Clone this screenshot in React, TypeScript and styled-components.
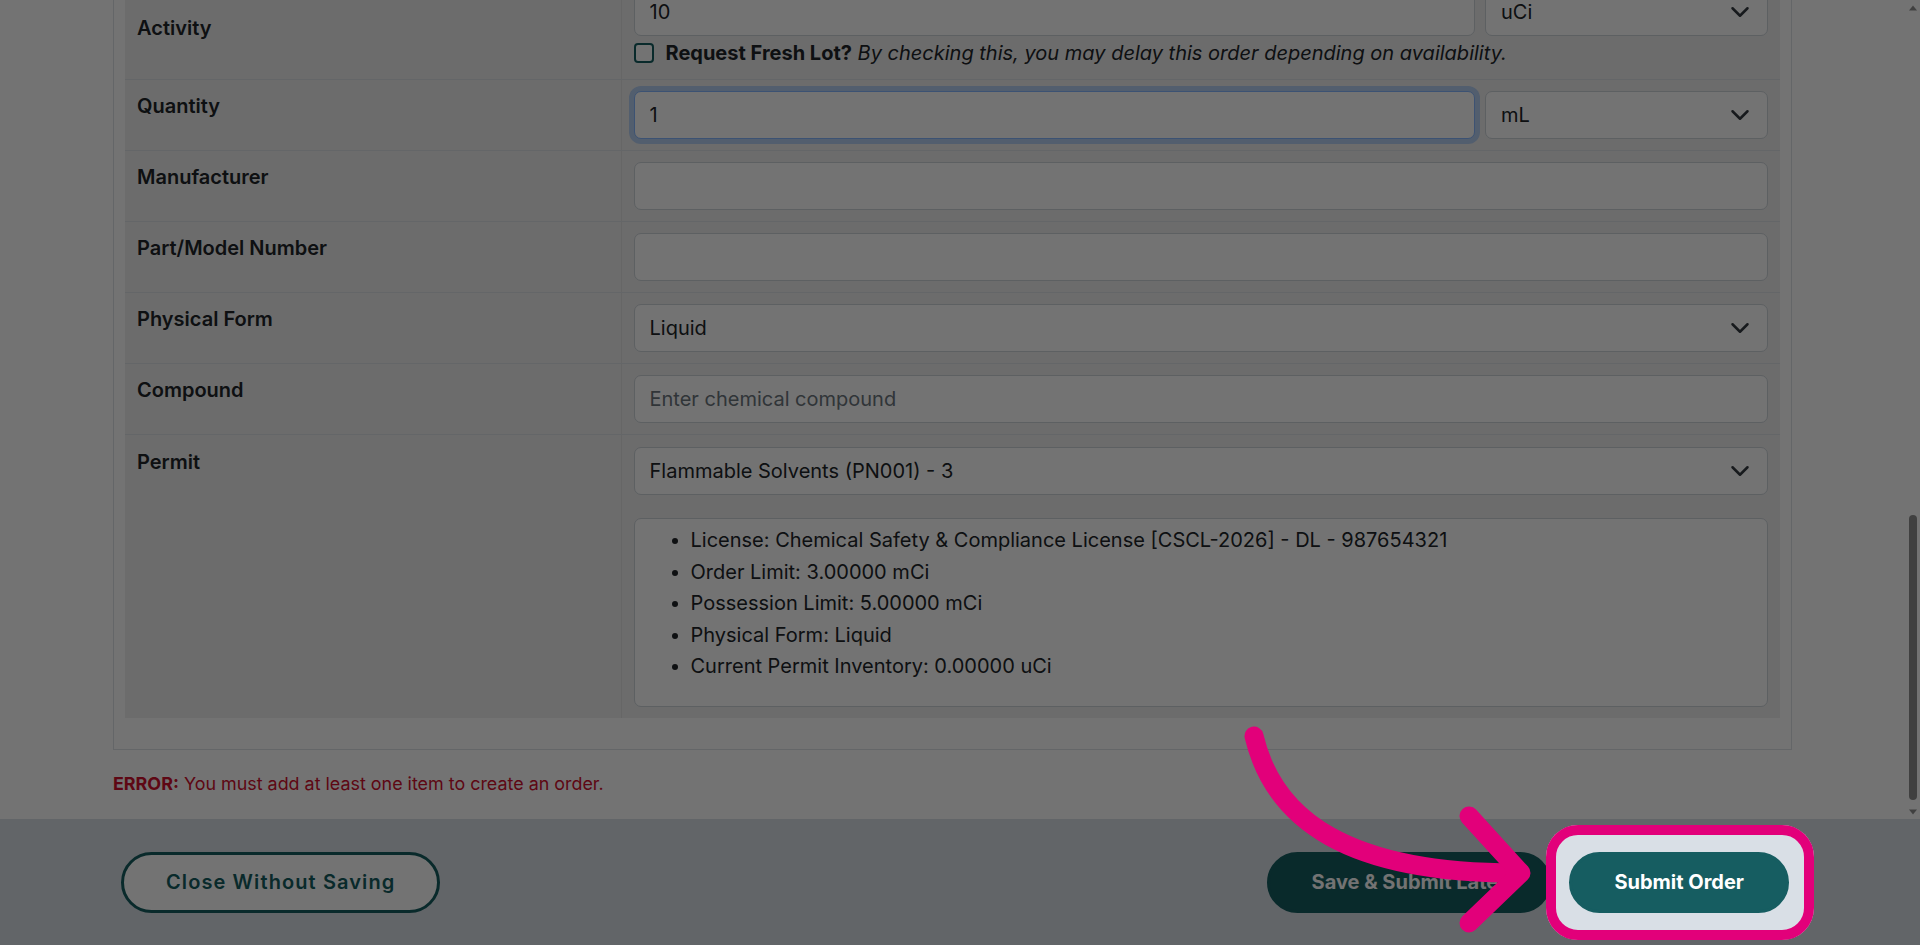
import React from "react";
import styled, { createGlobalStyle, css } from "styled-components";

const TEAL = "#165d61";
const PINK = "#e2007a";
const SCROLL_GREY = "#8f8f8f";

const GlobalStyle = createGlobalStyle`
  html, body { margin: 0; padding: 0; height: 100%; overflow: hidden; }
  body {
    font-family: Inter, "Noto Sans", "Liberation Sans", sans-serif;
    color: #212529;
    background: #ffffff;
  }
  #root { height: 100%; }
  *, *::before, *::after { box-sizing: border-box; }
`;

const Page = styled.div`
  height: 100vh;
  display: flex;
  flex-direction: column;
  position: relative;
`;

const Main = styled.div`
  flex: 1;
  min-height: 0;
  display: flex;
  background: #ffffff;
`;

const ScrollArea = styled.div`
  flex: 1;
  min-width: 0;
  overflow: hidden;
  display: flex;
  flex-direction: column-reverse;
`;

const ScrollRail = styled.div`
  width: 15px;
  flex-shrink: 0;
  display: flex;
  flex-direction: column;
  background: #ffffff;
`;

const ScrollArrow = styled.div`
  height: 15px;
  flex-shrink: 0;
  display: flex;
  align-items: center;
  justify-content: center;
`;

const ScrollTrack = styled.div`
  flex: 1;
  display: flex;
  flex-direction: column;
  justify-content: flex-end;
  padding-bottom: 4px;
`;

const ScrollThumb = styled.div`
  width: 8px;
  height: 285px;
  margin: 0 auto;
  border-radius: 4px;
  background: ${SCROLL_GREY};
`;

const ScrollContent = styled.div`
  flex-shrink: 0;
  padding: 24px 113px 22px;
`;

const PageTitle = styled.h1`
  margin: 0 0 20px;
  font-size: 32px;
  line-height: 40px;
  font-weight: 700;
  color: ${TEAL};
`;

const SectionTitle = styled.h2`
  margin: 0 0 14px;
  font-size: 24px;
  line-height: 36px;
  font-weight: 700;
`;

const Section = styled.div`
  border: 1px solid #dee2e6;
  padding: 11px;
  background: #ffffff;
  & + ${SectionTitle} { margin-top: 20px; }
`;

const FormTable = styled.div`
  background: #f0f0f0;
  margin-bottom: 20px;
`;

const Row = styled.div`
  display: grid;
  grid-template-columns: 30% 70%;
  border-top: 1px solid #dee2e6;
`;

const LabelCell = styled.div<{ $center?: boolean; $padTop?: number }>`
  display: flex;
  align-items: ${(p) => (p.$center ? "center" : "flex-start")};
  padding: ${(p) => p.$padTop ?? 11}px 12px 11px;
  border-right: 1px solid #e3e3e3;
  font-size: 20px;
  line-height: 30px;
  font-weight: 600;
  color: #212529;
`;

const ValueCell = styled.div<{ $padTop?: number }>`
  padding: ${(p) => p.$padTop ?? 11}px 12px 11px;
  min-width: 0;
`;

const TextInput = styled.input<{ $focused?: boolean }>`
  display: block;
  width: 100%;
  height: 48px;
  padding: 0 15px;
  font-family: inherit;
  font-size: 20px;
  color: #212529;
  background: #ffffff;
  border: 1px solid #ced4da;
  border-radius: 7px;
  outline: none;
  &::placeholder { color: #6c757d; opacity: 1; }
  ${(p) =>
    p.$focused &&
    css`
      border-color: #86b7fe;
      box-shadow: 0 0 0 5px rgba(13, 110, 253, 0.25);
    `}
`;

const SelectBox = styled.div`
  height: 48px;
  display: flex;
  align-items: center;
  justify-content: space-between;
  padding: 0 17px 0 15px;
  border: 1px solid #ced4da;
  border-radius: 7px;
  background: #ffffff;
  font-size: 20px;
  color: #212529;
  white-space: nowrap;
`;

const AmountGrid = styled.div`
  display: grid;
  grid-template-columns: 1fr 283px;
  gap: 10px;
`;

const CheckLine = styled.label`
  display: flex;
  align-items: center;
  gap: 12px;
  margin-top: 2px;
  font-size: 20px;
  line-height: 30px;
  white-space: nowrap;
  strong { font-weight: 700; }
  em { font-style: italic; }
`;

const CheckBox = styled.span`
  width: 20px;
  height: 20px;
  flex-shrink: 0;
  border: 2.5px solid ${TEAL};
  border-radius: 4px;
  background: #ffffff;
`;

const InfoBox = styled.div`
  margin-top: 23px;
  border: 1px solid #ced4da;
  border-radius: 7px;
  background: #ffffff;
  padding: 6px;
`;

const InfoList = styled.ul`
  margin: 0 0 17.5px;
  padding-left: 50px;
  font-size: 20px;
  line-height: 31.5px;
`;

const ErrorText = styled.p`
  margin: 21px 0 0;
  font-size: 17.9px;
  line-height: 26px;
  color: #d0102e;
  strong { font-weight: 700; }
`;

const Footer = styled.footer`
  height: 126px;
  flex-shrink: 0;
  display: flex;
  align-items: center;
  gap: 18px;
  padding: 0 131px 0 121px;
  background: #d9dfe6;
`;

const Spacer = styled.div`
  flex: 1;
`;

const PillButton = styled.button<{ $variant: "outline" | "solid" }>`
  font-family: inherit;
  font-size: 20px;
  line-height: 30px;
  padding: 12.5px 42px;
  border-radius: 999px;
  border: 3px solid ${TEAL};
  cursor: pointer;
  white-space: nowrap;
  ${(p) =>
    p.$variant === "outline"
      ? css`
          background: #ffffff;
          color: ${TEAL};
          font-weight: 600;
          letter-spacing: 1.1px;
        `
      : css`
          background: ${TEAL};
          color: #ffffff;
          font-weight: 700;
        `}
`;

const SpotlightAnchor = styled.div`
  position: relative;
  display: flex;
`;

const SpotlightFrame = styled.div`
  position: absolute;
  top: -27px;
  bottom: -27px;
  left: -23px;
  right: -25px;
  border: 10px solid ${PINK};
  border-radius: 32px;
  box-shadow: 0 0 0 4000px rgba(0, 0, 0, 0.55);
  pointer-events: none;
  z-index: 10;
`;

const ArrowSvg = styled.svg`
  position: absolute;
  left: -335px;
  top: -136px;
  width: 310px;
  height: 230px;
  overflow: visible;
  pointer-events: none;
  z-index: 11;
`;

const Chevron = () => (
  <svg width="20" height="20" viewBox="0 0 16 16" aria-hidden="true">
    <path d="M2 5l6 6 6-6" fill="none" stroke="#343a40" strokeWidth="2" strokeLinecap="round" strokeLinejoin="round" />
  </svg>
);

const Triangle = ({ up }: { up?: boolean }) => (
  <svg width="8" height="6" viewBox="0 0 8 6" aria-hidden="true">
    <path d={up ? "M4 0.5L8 5.5H0Z" : "M0 0.5H8L4 5.5Z"} fill={SCROLL_GREY} />
  </svg>
);

const Select = ({ value }: { value: string }) => (
  <SelectBox>
    <span>{value}</span>
    <Chevron />
  </SelectBox>
);

const orderRows = [
  "Requested By",
  "Email",
  "Phone",
  "Department",
  "Building",
  "Room",
  "Principal Investigator",
  "Account Number",
  "Requested Delivery Date",
];

const itemRows = [
  "Item Type",
  "Vendor",
  "Isotope",
  "Item Name",
  "CAS Number",
  "Catalog Number",
  "Concentration",
  "Reference Date",
];

const permitInfo = [
  "License: Chemical Safety & Compliance License [CSCL-2026] - DL - 987654321",
  "Order Limit: 3.00000 mCi",
  "Possession Limit: 5.00000 mCi",
  "Physical Form: Liquid",
  "Current Permit Inventory: 0.00000 uCi",
];

const FieldRow = ({
  label,
  children,
  center,
  padTop,
}: {
  label: string;
  children: React.ReactNode;
  center?: boolean;
  padTop?: number;
}) => (
  <Row>
    <LabelCell $center={center} $padTop={padTop}>
      {label}
    </LabelCell>
    <ValueCell $padTop={padTop}>{children}</ValueCell>
  </Row>
);

export default function App() {
  return (
    <>
      <GlobalStyle />
      <Page>
        <Main>
          <ScrollArea>
            <ScrollContent>
              <PageTitle>Create Order</PageTitle>
              <SectionTitle>Order Information</SectionTitle>
              <Section>
                <FormTable>
                  {orderRows.map((r) => (
                    <FieldRow key={r} label={r}>
                      <TextInput readOnly />
                    </FieldRow>
                  ))}
                </FormTable>
              </Section>
              <SectionTitle>Item Details</SectionTitle>
              <Section>
                <FormTable>
                  {itemRows.map((r) => (
                    <FieldRow key={r} label={r}>
                      <TextInput readOnly />
                    </FieldRow>
                  ))}
                  <FieldRow label="Activity" center>
                    <AmountGrid>
                      <TextInput defaultValue="10" />
                      <Select value="uCi" />
                    </AmountGrid>
                    <CheckLine>
                      <CheckBox />
                      <span>
                        <strong>Request Fresh Lot?</strong>{" "}
                        <em>By checking this, you may delay this order depending on availability.</em>
                      </span>
                    </CheckLine>
                  </FieldRow>
                  <FieldRow label="Quantity">
                    <AmountGrid>
                      <TextInput defaultValue="1" $focused />
                      <Select value="mL" />
                    </AmountGrid>
                  </FieldRow>
                  <FieldRow label="Manufacturer">
                    <TextInput />
                  </FieldRow>
                  <FieldRow label="Part/Model Number">
                    <TextInput />
                  </FieldRow>
                  <FieldRow label="Physical Form">
                    <Select value="Liquid" />
                  </FieldRow>
                  <FieldRow label="Compound">
                    <TextInput placeholder="Enter chemical compound" />
                  </FieldRow>
                  <FieldRow label="Permit" padTop={12}>
                    <Select value="Flammable Solvents (PN001) - 3" />
                    <InfoBox>
                      <InfoList>
                        {permitInfo.map((t) => (
                          <li key={t}>{t}</li>
                        ))}
                      </InfoList>
                    </InfoBox>
                  </FieldRow>
                </FormTable>
              </Section>
              <ErrorText>
                <strong>ERROR:</strong> You must add at least one item to create an order.
              </ErrorText>
            </ScrollContent>
          </ScrollArea>
          <ScrollRail>
            <ScrollArrow>
              <Triangle up />
            </ScrollArrow>
            <ScrollTrack>
              <ScrollThumb />
            </ScrollTrack>
            <ScrollArrow>
              <Triangle />
            </ScrollArrow>
          </ScrollRail>
        </Main>
        <Footer>
          <PillButton $variant="outline">Close Without Saving</PillButton>
          <Spacer />
          <PillButton $variant="solid">Save &amp; Submit Later</PillButton>
          <SpotlightAnchor>
            <PillButton $variant="solid">Submit Order</PillButton>
            <SpotlightFrame />
            <ArrowSvg viewBox="0 0 310 230" aria-hidden="true">
              <path d="M20 20 C40 105 115 157 282 157" fill="none" stroke={PINK} strokeWidth="19" strokeLinecap="round" />
              <path d="M235 100 L287 157 L235 207" fill="none" stroke={PINK} strokeWidth="19" strokeLinecap="round" strokeLinejoin="round" />
            </ArrowSvg>
          </SpotlightAnchor>
        </Footer>
      </Page>
    </>
  );
}
